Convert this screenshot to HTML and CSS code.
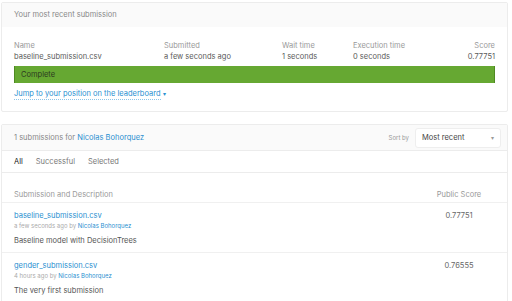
FILE: index.html
```html
<!DOCTYPE html>
<html>
<head>
  <title>Submissions</title>
  <link rel="stylesheet" href="styles.css">
</head>
<body>
  <div class="panel">
    <div class="panel-header">Your most recent submission</div>
    <div class="recent">
      <div class="stats">
        <div class="stat">
          <div class="stat-label">Name</div>
          <div class="stat-value">baseline_submission.csv</div>
        </div>
        <div class="stat">
          <div class="stat-label">Submitted</div>
          <div class="stat-value">a few seconds ago</div>
        </div>
        <div class="stat">
          <div class="stat-label">Wait time</div>
          <div class="stat-value">1 seconds</div>
        </div>
        <div class="stat">
          <div class="stat-label">Execution time</div>
          <div class="stat-value">0 seconds</div>
        </div>
        <div class="stat stat-score">
          <div class="stat-label">Score</div>
          <div class="stat-value">0.77751</div>
        </div>
      </div>
      <div class="status-bar">Complete</div>
      <a class="jump-link" href="#">Jump to your position on the leaderboard</a><span class="caret">&#9662;</span>
    </div>
  </div>

  <div class="panel panel-list">
    <div class="panel-header list-header">
      <div>1 submissions for <a class="user-link" href="#">Nicolas Bohorquez</a></div>
      <div class="sort">
        <span class="sort-label">Sort by</span>
        <div class="sort-select">
          <span>Most recent</span>
          <span class="sort-caret">&#9662;</span>
        </div>
      </div>
    </div>
    <div class="tabs">
      <span class="tab tab-active">All</span>
      <span class="tab">Successful</span>
      <span class="tab">Selected</span>
    </div>
    <div class="sub-row sub-head">
      <div>Submission and Description</div>
      <div class="sub-score">Public Score</div>
    </div>
    <div class="sub-row">
      <div>
        <a class="sub-name" href="#">baseline_submission.csv</a>
        <div class="sub-meta">a few seconds ago by <a class="user-link" href="#">Nicolas Bohorquez</a></div>
        <div class="sub-desc">Baseline model with DecisionTrees</div>
      </div>
      <div class="sub-score">0.77751</div>
    </div>
    <div class="sub-row">
      <div>
        <a class="sub-name" href="#">gender_submission.csv</a>
        <div class="sub-meta">4 hours ago by <a class="user-link" href="#">Nicolas Bohorquez</a></div>
        <div class="sub-desc">The very first submission</div>
      </div>
      <div class="sub-score">0.76555</div>
    </div>
  </div>
</body>
</html>
```

FILE: styles.css
```css
body {
  margin: 0;
  background-color: #ffffff;
  font-family: Inter, "Noto Sans", sans-serif;
  font-size: 7.5px;
  color: #555555;
}

a {
  text-decoration: none;
}

.panel {
  width: 505px;
  margin: 2px 0 0 1px;
  border: 1px solid #ececec;
  border-radius: 2px;
  background-color: #ffffff;
}

.panel-header {
  height: 24px;
  line-height: 24px;
  padding: 0 12px;
  background-color: #fafafa;
  color: #888888;
}

.recent {
  padding: 13px 12px 11px 12px;
}

.stats {
  display: grid;
  grid-template-columns: 150px 118px 71px 1fr 60px;
  line-height: 11px;
}

.stat-label {
  color: #999999;
}

.stat-value {
  color: #5a5a5a;
}

.stat-score {
  text-align: right;
}

.status-bar {
  height: 17px;
  line-height: 17px;
  margin-top: 4px;
  padding-left: 6px;
  background-color: #66a832;
  border-left: 1px solid #4f8a22;
  border-right: 1px solid #4f8a22;
  color: #2c3a20;
}

.jump-link {
  display: inline-block;
  margin-top: 6px;
  line-height: 10px;
  color: #2a8fd0;
  border-bottom: 1px dotted #8cc4e8;
}

.caret {
  margin-left: 2px;
  color: #2a8fd0;
  font-size: 6px;
}

.panel-list {
  margin-top: 12px;
}

.list-header {
  display: flex;
  justify-content: space-between;
  align-items: center;
  height: 25px;
  padding-right: 6px;
  border-bottom: 1px solid #ececec;
}

.user-link {
  color: #2a8fd0;
}

.sort {
  display: flex;
  align-items: center;
  gap: 6px;
}

.sort-label {
  font-size: 6px;
  color: #999999;
}

.sort-select {
  display: flex;
  justify-content: space-between;
  align-items: center;
  width: 72px;
  height: 18px;
  padding: 0 6px;
  background-color: #ffffff;
  border: 1px solid #eeeeee;
  border-radius: 3px;
  color: #444444;
  line-height: 18px;
}

.sort-caret {
  font-size: 6px;
  color: #999999;
}

.tabs {
  display: flex;
  gap: 13px;
  height: 21px;
  line-height: 21px;
  padding: 0 12px;
  border-bottom: 1px solid #ececec;
}

.tab {
  color: #777777;
}

.tab-active {
  color: #222222;
}

.sub-row {
  display: grid;
  grid-template-columns: 1fr 72px;
  padding: 7px 12px 6px 12px;
  line-height: 11px;
  border-bottom: 1px solid #f0f0f0;
}

.sub-head {
  padding-top: 16px;
  padding-bottom: 2px;
  color: #999999;
}

.sub-score {
  text-align: center;
  color: #666666;
}

.sub-head .sub-score {
  color: #999999;
}

.sub-name {
  color: #2a8fd0;
}

.sub-meta {
  font-size: 6px;
  line-height: 10px;
  color: #aaaaaa;
}

.sub-desc {
  margin-top: 4px;
  color: #555555;
}
```
